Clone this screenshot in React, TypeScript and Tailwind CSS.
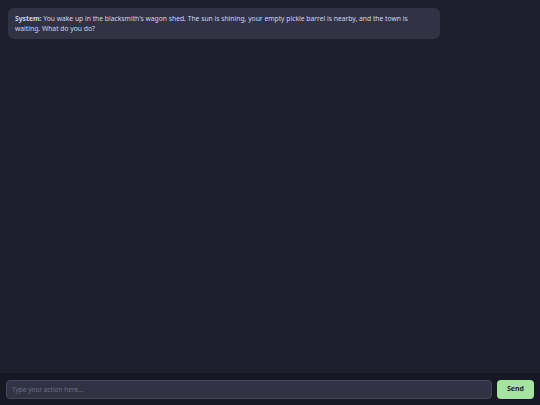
export default function App() {
  return (
    <div
      className="flex h-[405px] w-[540px] flex-col bg-[#1e1e2e] text-[#cdd6f4]"
      style={{ fontFamily: '"Noto Sans", sans-serif' }}
    >
      <div className="flex flex-1 flex-col p-2">
        <div className="w-[432px] rounded-[6px] bg-[#313244] px-[7px] py-[6px] text-[6.75px] leading-[9.5px]">
          <span className="font-bold">System:</span> You wake up in the blacksmith's wagon shed. The sun is shining, your empty pickle barrel is nearby, and the town is waiting. What do you do?
        </div>
      </div>
      <div className="flex h-[32px] items-center gap-[5px] bg-[#181825] px-[6px] pt-[1px]">
        <input
          className="h-[19px] flex-1 rounded-[4px] border border-[#45475a] bg-[#313244] px-[5px] text-[6.5px] text-[#cdd6f4] outline-none placeholder:text-[#6c7086]"
          placeholder="Type your action here..."
        />
        <button className="h-[19px] w-[37px] rounded-[4px] bg-[#a6e3a1] text-[7px] font-bold text-[#1e1e2e]">
          Send
        </button>
      </div>
    </div>
  );
}
